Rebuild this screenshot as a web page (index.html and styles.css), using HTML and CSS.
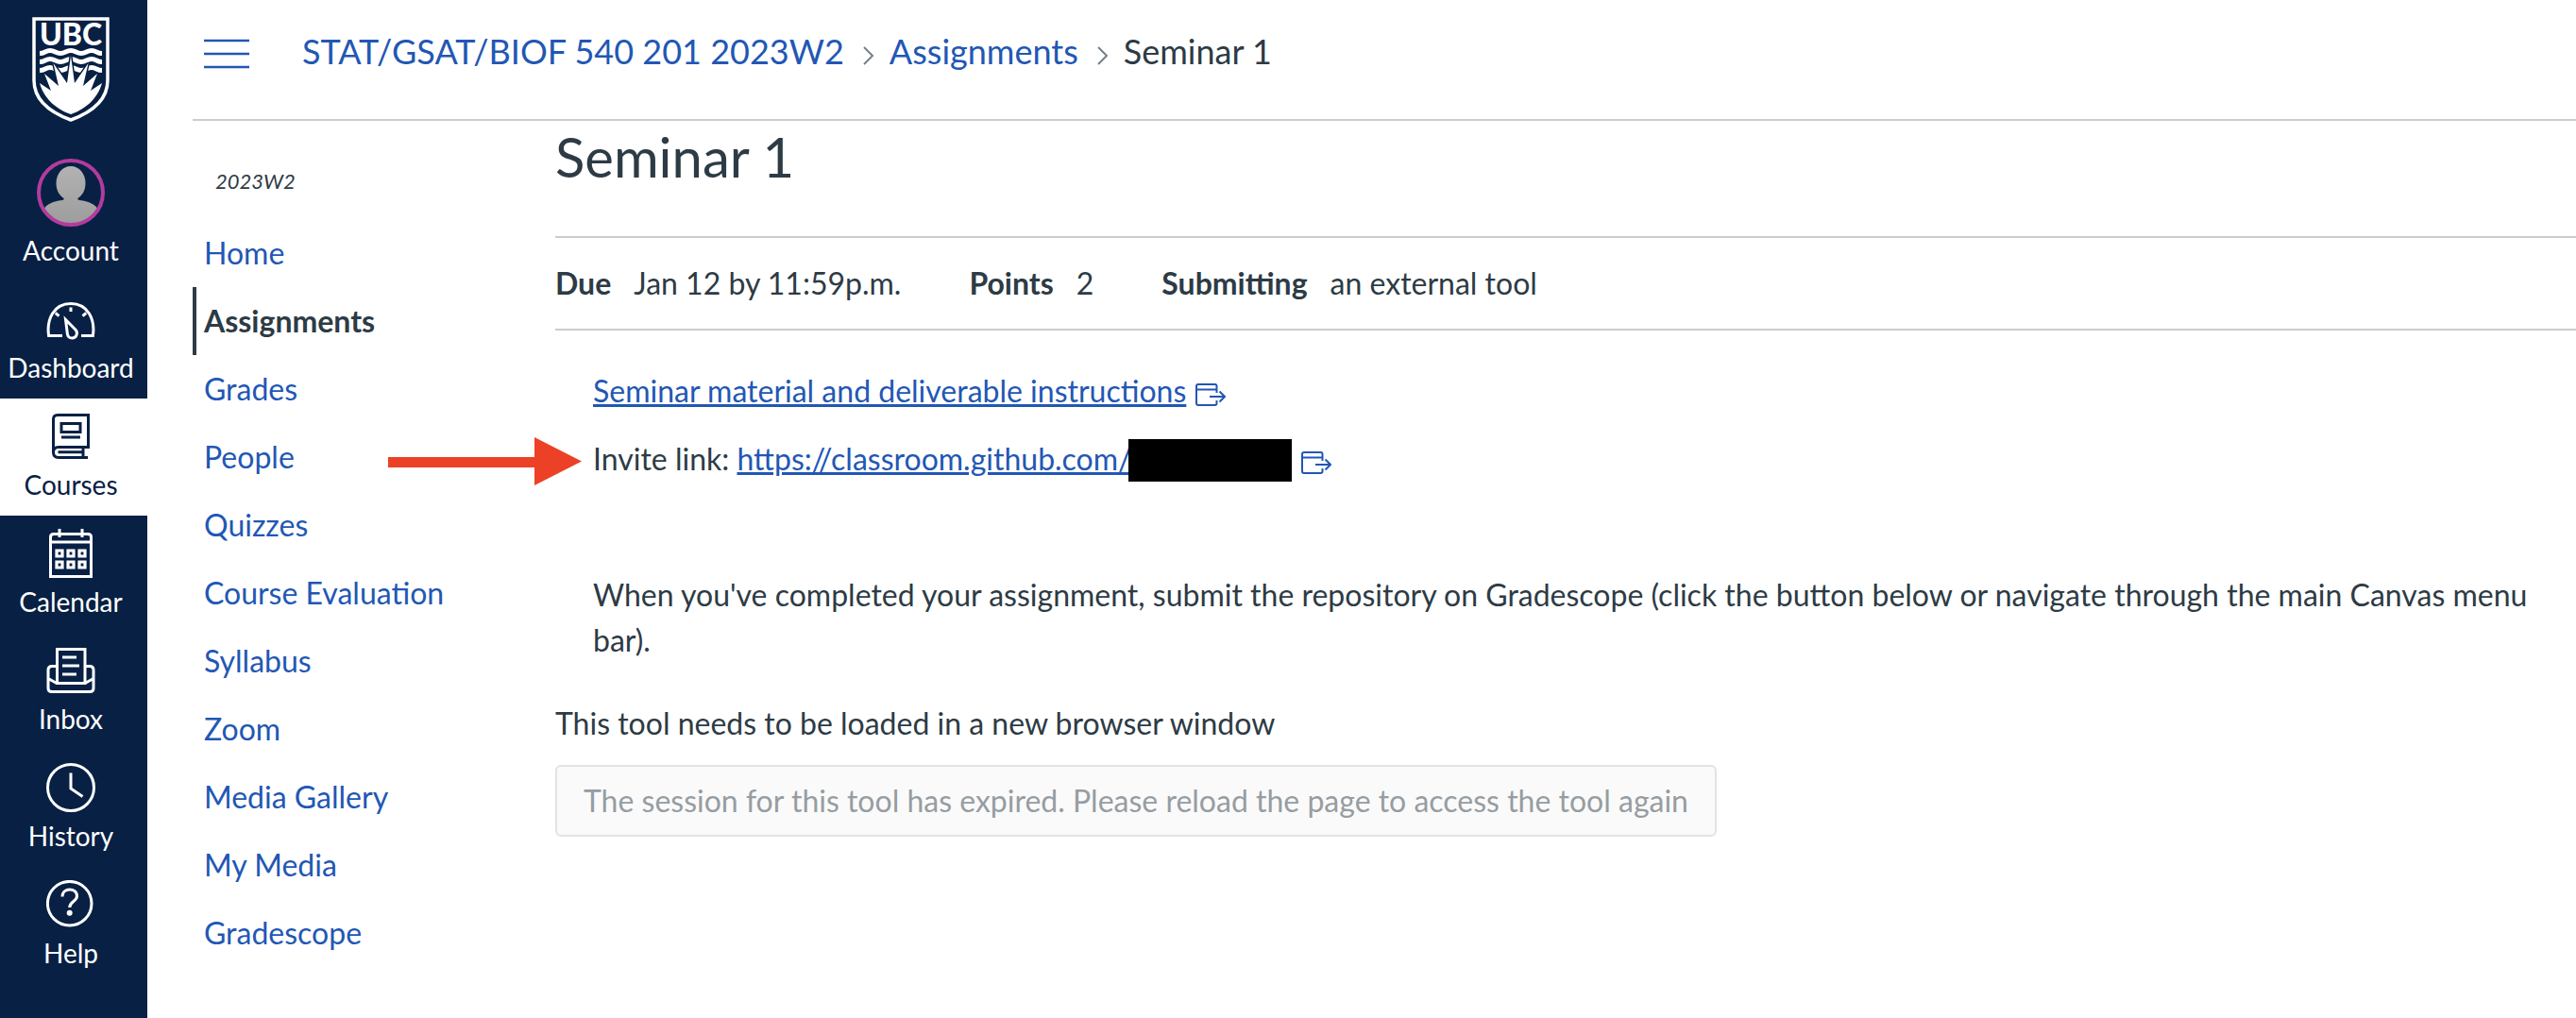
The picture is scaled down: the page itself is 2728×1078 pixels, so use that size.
FILE: index.html
```html
<!DOCTYPE html>
<html lang="en">
<head>
<meta charset="utf-8">
<title>Seminar 1</title>
<link rel="stylesheet" href="styles.css">
</head>
<body>
<div class="app">
  <nav class="global-nav" aria-label="Global">
    <a class="logo" href="#" aria-label="UBC home">
      <svg width="82" height="122" viewBox="0 -10 82 122">
        <path d="M2 2H80V67C80 89 63 101 41 109C19 101 2 89 2 67Z" fill="none" stroke="#fff" stroke-width="3.5"/>
        <text class="logo-text" x="41" y="30" text-anchor="middle">UBC</text>
        <g fill="none" stroke="#fff" stroke-width="5">
          <path d="M8 38.500C13.500 38.500 14 35.500 19 35.500S25 38.500 30 38.500S36 35.500 41 35.500S47 38.500 52 38.500S58 35.500 63 35.500S68.500 38.500 74 38.500"/>
          <path d="M8 47.500C13.500 47.500 14 44.500 19 44.500S25 47.500 30 47.500S36 44.500 41 44.500S47 47.500 52 47.500S58 44.500 63 44.500S68.500 47.500 74 47.500"/>
          <path d="M8 56.500C13.500 56.500 14 53.500 19 53.500S25 56.500 30 56.500S36 53.500 41 53.500S47 56.500 52 56.500S58 53.500 63 53.500S68.500 56.500 74 56.500"/>
        </g>
        <path d="M41 103C27 98 13 88 8 70L20 78L13 60L28 73L22.500 49L37 70L41 41L45 70L59.500 49L54 73L69 60L62 78L74 70C69 88 55 98 41 103Z" fill="#fff" stroke="#082044" stroke-width="3" paint-order="stroke"/>
      </svg>
    </a>
    <ul class="global-list">
      <li><a class="global-item" href="#">
        <svg width="72" height="72" viewBox="0 0 72 72">
          <defs>
            <clipPath id="face"><circle cx="36" cy="36" r="33"/></clipPath>
            <linearGradient id="grey" x1="0" y1="0" x2="0" y2="1"><stop offset="0" stop-color="#b2b2b2"/><stop offset="1" stop-color="#9c9c9c"/></linearGradient>
          </defs>
          <path clip-path="url(#face)" fill="url(#grey)" d="M36 8C45 8 51.500 16 51.500 26C51.500 34 48 39 43 42.500C44 44 46 44 49 44.500C57 46 64 50 66 56V72H6V56C8 50 15 46 23 44.500C26 44 28 44 29 42.500C24 39 20.500 34 20.500 26C20.500 16 27 8 36 8Z"/>
          <circle cx="36" cy="36" r="34" fill="none" stroke="#b13c9e" stroke-width="4"/>
        </svg>
        <span>Account</span></a></li>
      <li><a class="global-item" href="#">
        <svg class="icon" viewBox="0 0 52 52">
          <path d="M17 43.500H2.600C0 26 8 9.500 26 9.500S52 26 49.400 43.500H37"/>
          <path d="M26 13.500V18M9.800 19.500L13.500 22.600M42.200 19.500L38.500 22.600"/>
          <path d="M20.500 26.500L31.300 37.500C34 41 31.500 46 27.500 46C24 46 22.500 43.500 22.300 41Z"/>
        </svg>
        <span>Dashboard</span></a></li>
      <li><a class="global-item active" href="#" aria-current="true">
        <svg class="icon" viewBox="0 0 52 52">
          <path d="M7.500 44V8Q7.500 3.500 12 3.500H44.500V37.500H13Q7.500 37.500 7.500 43T13 48.500H44M39 38V48M39 42.800H12.500"/>
          <path d="M16 12.500H36V21.500H16ZM16 27H36"/>
        </svg>
        <span>Courses</span></a></li>
      <li><a class="global-item" href="#">
        <svg class="icon" viewBox="0 0 52 52">
          <path d="M4.500 50.500V8.500Q4.500 5.500 8 5.500H44Q47.500 5.500 47.500 8.500V50.500ZM4.500 14H47.500M14 0V9M38 0V9"/>
          <path d="M11 23H17V29H11ZM23 23H29V29H23ZM35 23H41V29H35ZM11 35H17V41H11ZM23 35H29V41H23ZM35 35H41V41H35Z" stroke-width="3.200"/>
        </svg>
        <span>Calendar</span></a></li>
      <li><a class="global-item" href="#">
        <svg class="icon" viewBox="0 0 52 52">
          <path d="M11.500 39.500V3.500H41V39.500ZM11 21.500H6Q2 21.500 2 25.500V45Q2 48.500 6 48.500H46Q50 48.500 50 45V25.500Q50 21.500 46 21.500H41M2 34.500L11 39.500M50 34.500L41 39.500"/>
          <path d="M17 12H32M17 21H35M17 30H32"/>
        </svg>
        <span>Inbox</span></a></li>
      <li><a class="global-item" href="#">
        <svg class="icon" viewBox="0 0 52 52">
          <circle cx="26" cy="26" r="24.500"/>
          <path d="M26 10.500V27L38.500 35.500"/>
        </svg>
        <span>History</span></a></li>
      <li><a class="global-item" href="#">
        <svg class="icon" viewBox="0 0 52 52">
          <circle cx="24.700" cy="24.700" r="23.300"/>
          <path d="M17 17.500C17 7.500 32.500 7.500 32.500 17C32.500 22.500 24.700 22.500 24.700 29"/>
          <circle class="dot" cx="24.700" cy="34.700" r="3"/>
        </svg>
        <span>Help</span></a></li>
    </ul>
  </nav>

  <div class="page">
    <header class="topbar">
      <button class="menu-button" type="button" aria-label="Toggle course menu">
        <svg width="48" height="32" viewBox="0 0 48 32"><path d="M0 2H48M0 16H48M0 30H48" stroke="#2257b4" stroke-width="2.600"/></svg>
      </button>
      <nav aria-label="Breadcrumbs">
        <ol class="crumbs">
          <li><a href="#">STAT/GSAT/BIOF 540 201 2023W2</a></li>
          <li><svg class="chevron" viewBox="0 0 12 20"><path d="M1 1L10 10L1 19"/></svg><a href="#">Assignments</a></li>
          <li><svg class="chevron" viewBox="0 0 12 20"><path d="M1 1L10 10L1 19"/></svg><span>Seminar 1</span></li>
        </ol>
      </nav>
    </header>

    <div class="columns">
      <nav class="course-nav" aria-label="Course">
        <p class="term">2023W2</p>
        <ul>
          <li><a href="#">Home</a></li>
          <li><a class="active" href="#" aria-current="page">Assignments</a></li>
          <li><a href="#">Grades</a></li>
          <li><a href="#">People</a></li>
          <li><a href="#">Quizzes</a></li>
          <li><a href="#">Course Evaluation</a></li>
          <li><a href="#">Syllabus</a></li>
          <li><a href="#">Zoom</a></li>
          <li><a href="#">Media Gallery</a></li>
          <li><a href="#">My Media</a></li>
          <li><a href="#">Gradescope</a></li>
        </ul>
      </nav>

      <main class="content">
        <h1>Seminar 1</h1>
        <dl class="details">
          <div><dt>Due</dt><dd>Jan 12 by 11:59p.m.</dd></div>
          <div><dt>Points</dt><dd>2</dd></div>
          <div><dt>Submitting</dt><dd>an external tool</dd></div>
        </dl>
        <div class="description">
          <p><a href="#">Seminar material and deliverable instructions</a><svg class="external" viewBox="0 0 32 24"><path d="M22.500 10V3Q22.500 1 20.500 1H3Q1 1 1 3V21Q1 23 3 23H20.500Q22.500 23 22.500 21V18M1 6.500H22.500M15 14H31M25.500 8.500L31 14L25.500 19.500"/></svg></p>
          <p class="invite"><svg class="arrow" viewBox="0 0 205 51"><path d="M0 21H155V0L205 25.500L155 51V32H0Z"/></svg>Invite link: <a href="#">https://classroom.github.com/</a><span class="redacted"></span><svg class="external" viewBox="0 0 32 24"><path d="M22.500 10V3Q22.500 1 20.500 1H3Q1 1 1 3V21Q1 23 3 23H20.500Q22.500 23 22.500 21V18M1 6.500H22.500M15 14H31M25.500 8.500L31 14L25.500 19.500"/></svg></p>
          <p>&nbsp;</p>
          <p>When you've completed your assignment, submit the repository on Gradescope (click the button below or navigate through the main Canvas menu bar).</p>
        </div>
        <p class="tool-note">This tool needs to be loaded in a new browser window</p>
        <button class="tool-button" type="button" disabled>The session for this tool has expired. Please reload the page to access the tool again</button>
      </main>
    </div>
  </div>
</div>
</body>
</html>
```
FILE: styles.css
```css
* {
  box-sizing: border-box;
}

body {
  margin: 0;
  background: #fff;
  color: #2d3b45;
  font-family: Lato, "Liberation Sans", sans-serif;
  font-size: 32px;
  line-height: 48px;
}

ul, ol, dl, dd, p, h1 {
  margin: 0;
  padding: 0;
  list-style: none;
}

a {
  color: #2257b4;
  text-decoration: none;
}

svg {
  flex: none;
}

.app {
  display: flex;
  min-height: 100vh;
}

/* Global navigation */
.global-nav {
  flex: none;
  width: 156px;
  background: #082044;
}

.logo {
  display: flex;
  justify-content: center;
  padding: 8px 6px 24px 0;
}

.logo-text {
  fill: #fff;
  font-size: 32px;
  font-weight: 900;
  line-height: 38px;
}

.global-item {
  display: flex;
  flex-direction: column;
  align-items: center;
  gap: 8px;
  padding: 14px 6px 16px 0;
  color: #fff;
  font-size: 28px;
  line-height: 34px;
}

.global-item.active {
  background: #fff;
  color: #082044;
}

.icon {
  width: 52px;
  height: 52px;
  fill: none;
  stroke: currentColor;
  stroke-width: 3;
}

.icon .dot {
  fill: currentColor;
  stroke: none;
}

/* Page header */
.page {
  flex: 1;
  min-width: 0;
  padding-left: 48px;
}

.topbar {
  display: flex;
  gap: 56px;
  padding: 32px 12px 50px;
  border-bottom: 2px solid #c7cdd1;
}

.menu-button {
  display: flex;
  align-items: center;
  padding: 6px 0 0;
  border: 0;
  background: none;
}

.crumbs {
  display: flex;
  font-size: 36px;
  line-height: 44px;
}

.crumbs li {
  display: flex;
  align-items: center;
}

.chevron {
  width: 12px;
  height: 20px;
  margin: 10px 16px 0 20px;
  fill: none;
  stroke: #73818c;
  stroke-width: 2;
}

/* Course navigation */
.columns {
  display: flex;
}

.course-nav {
  flex: none;
  width: 384px;
}

.term {
  padding: 48px 24px 24px;
  font-size: 22px;
  font-style: italic;
  line-height: 32px;
}

.course-nav a {
  display: block;
  padding: 12px 8px;
  border-left: 4px solid transparent;
}

.course-nav .active {
  border-color: #2d3b45;
  color: #2d3b45;
  font-weight: 700;
}

/* Assignment */
.content {
  flex: 1;
  min-width: 0;
}

h1 {
  padding: 3px 0 49px;
  font-size: 58px;
  font-weight: 400;
  line-height: 70px;
}

.details {
  display: flex;
  gap: 72px;
  padding: 24px 0;
  border: solid #c7cdd1;
  border-width: 2px 0;
}

.details div {
  display: flex;
  gap: 24px;
}

.details dt {
  font-weight: 700;
}

.description {
  display: flex;
  flex-direction: column;
  gap: 24px;
  padding: 40px;
}

.description a {
  text-decoration: underline;
}

.external {
  width: 32px;
  height: 24px;
  margin-left: 10px;
  vertical-align: -4px;
  fill: none;
  stroke: #2257b4;
  stroke-width: 2;
}

.invite {
  position: relative;
}

.arrow {
  position: absolute;
  top: 1px;
  right: 100%;
  width: 205px;
  height: 51px;
  margin-right: 12px;
  fill: #ec4127;
}

.redacted {
  display: inline-block;
  width: 173px;
  height: 45px;
  margin-left: -4px;
  background: #000;
  vertical-align: bottom;
}

.tool-button {
  margin-top: 20px;
  padding: 12px 28px;
  border: 2px solid #e0e4e7;
  border-radius: 6px;
  background: #fafafa;
  color: #969da2;
  font: inherit;
}
```
